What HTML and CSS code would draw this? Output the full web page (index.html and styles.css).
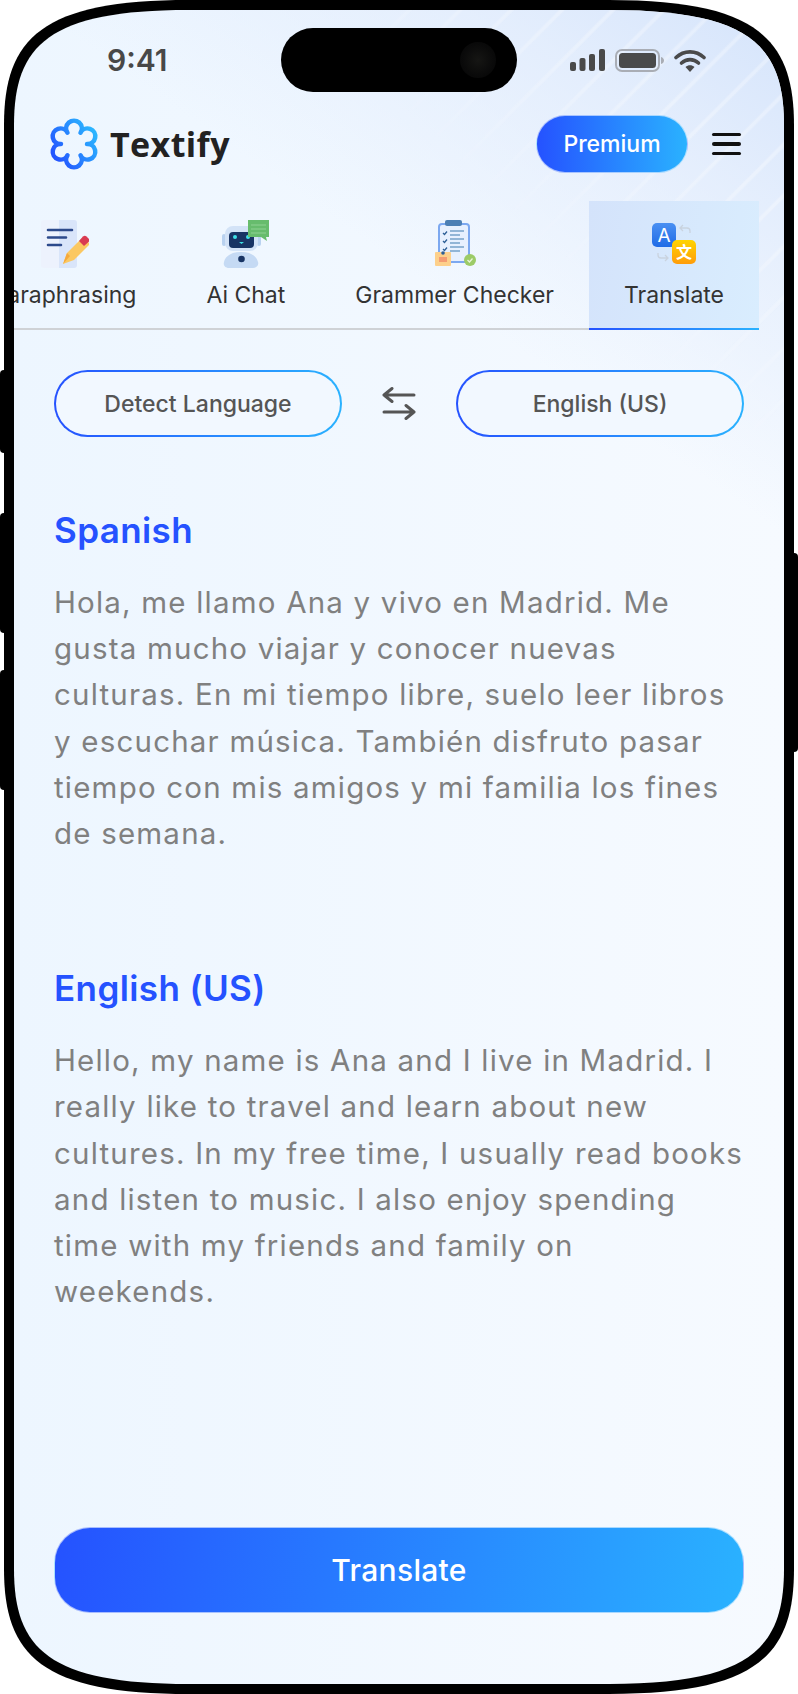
FILE: index.html
```html
<!DOCTYPE html>
<html lang="en">
<head>
  <meta charset="UTF-8" />
  <meta name="viewport" content="width=device-width, initial-scale=1.0"/>
  <title>Textify - Translate</title>
  <link rel="stylesheet" href="styles.css">
</head>
<body>
  <div class="phone">
    <span class="side-btn side-btn-mute"></span>
    <span class="side-btn side-btn-up"></span>
    <span class="side-btn side-btn-down"></span>
    <span class="side-btn side-btn-power"></span>

    <div class="frame">
    <div class="screen">
      <div class="status-bar">
        <span class="clock">9:41</span>
        <div class="island"><span class="island-cam"></span></div>
        <div class="status-icons">
          <svg width="35" height="22" viewBox="0 0 35 22"><rect x="0" y="13" width="6" height="9" rx="2"/><rect x="9.500" y="9" width="6" height="13" rx="2"/><rect x="19" y="5" width="6" height="17" rx="2"/><rect x="29" y="0" width="6" height="22" rx="2"/></svg>
          <svg width="49" height="23" viewBox="0 0 49 23"><rect x="1" y="1" width="43" height="21" rx="6" fill="none" stroke="#a9adb5" stroke-width="2"/><rect x="4" y="4" width="37" height="15" rx="3.500"/><path d="M46 8c2 .5 3 2 3 3.500s-1 3-3 3.500z" fill="#a9adb5"/></svg>
          <svg width="32" height="23" viewBox="0 0 32 23"><path d="M2 8.500C10 1 22 1 30 8.500" fill="none" stroke="#4a4a4a" stroke-width="3.600" stroke-linecap="round"/><path d="M7.500 14c5-4.500 12-4.500 17 0" fill="none" stroke="#4a4a4a" stroke-width="3.600" stroke-linecap="round"/><path d="M11.500 18c2.500-2.200 6.500-2.200 9 0L16 23z"/></svg>
        </div>
      </div>

      <header class="topbar">
        <div class="brand">
          <svg width="50" height="52" viewBox="0 0 50 52">
            <defs><linearGradient id="logoGrad" x1="0" y1="1" x2="1" y2="0.300"><stop offset="0" stop-color="#2246ff"/><stop offset="1" stop-color="#2bb4ff"/></linearGradient></defs>
            <path d="M38 26A7.800 7.800 0 1 0 31.500 14.740A7.800 7.800 0 1 0 18.500 14.740A7.800 7.800 0 1 0 12 26A7.800 7.800 0 1 0 18.500 37.260A7.800 7.800 0 1 0 31.500 37.260A7.800 7.800 0 1 0 38 26Z" fill="none" stroke="url(#logoGrad)" stroke-width="4.500" stroke-linejoin="round"/>
          </svg>
          <span class="brand-name">Textify</span>
        </div>
        <div class="topbar-right">
          <button class="premium-btn">Premium</button>
          <div class="menu-icon"><span></span><span></span><span></span></div>
        </div>
      </header>

      <nav class="tabs">
        <div class="tab">
          <svg width="48" height="48" viewBox="0 0 48 48">
            <rect x="0" y="0" width="36" height="48" rx="3" fill="#edf2fd"/>
            <path d="M18 0h15a3 3 0 0 1 3 3v42a3 3 0 0 1-3 3H18z" fill="#d9e5fa"/>
            <path d="M7 10h24M7 17.500h18M7 25h13" stroke="#2d4a8c" stroke-width="2.600" stroke-linecap="round"/>
            <path d="M22 44l4-11 16-16 7 7-16 16z" fill="#fbc862"/>
            <path d="M22 44l4-11 3 3z" fill="#f6a93b"/>
            <path d="M38 21l4-4.500a2.500 2.500 0 0 1 3.500 0l2 2a2.500 2.500 0 0 1 0 3.500l-4.500 4z" fill="#d93a52"/>
          </svg>
          <span>Paraphrasing</span>
        </div>
        <div class="tab">
          <svg width="48" height="48" viewBox="0 0 48 48">
            <rect x="0" y="14" width="4" height="12" rx="2" fill="#b9d2f0"/>
            <rect x="35" y="14" width="4" height="12" rx="2" fill="#b9d2f0"/>
            <rect x="3" y="6" width="33" height="25" rx="8" fill="#d3e3f7"/>
            <rect x="7" y="12" width="25" height="16" rx="4" fill="#183464"/>
            <circle cx="13" cy="17" r="2" fill="#3fe0e6"/><circle cx="26" cy="17" r="2" fill="#3fe0e6"/><path d="M17 22h5l-2.500 2z" fill="#3fe0e6"/>
            <path d="M7 48c-4 0-6-3-5-6 1-5 6-10 17-10s16 5 17 10c1 3-1 6-5 6z" fill="#c5daf4"/>
            <circle cx="19.500" cy="39" r="3.300" fill="#183464"/>
            <path d="M26 0h21v17h-3l1 4-6-4H26z" fill="#67bc6d"/>
            <path d="M29 5h15M29 9h15M29 13h15" stroke="#8fd294" stroke-width="1.200"/>
          </svg>
          <span>Ai Chat</span>
        </div>
        <div class="tab">
          <svg width="48" height="48" viewBox="0 0 48 48">
            <rect x="8" y="4" width="30" height="38" rx="3" fill="#e7f0fe" stroke="#7ca8f0" stroke-width="2"/>
            <rect x="14" y="0" width="17" height="6" rx="2" fill="#4c7fb4"/>
            <path d="M12 13l1.500 1.500 2.500-3M12 21l1.500 1.500 2.500-3M12 29l1.500 1.500 2.500-3" fill="none" stroke="#2d5f96" stroke-width="1.300"/>
            <path d="M19 11h14M19 15h10M19 19h14M19 23h10M19 27h14M19 31h10" stroke="#77a1c9" stroke-width="1.400"/>
            <rect x="4" y="32" width="16" height="14" rx="1" fill="#fdd08b"/>
            <rect x="8" y="37" width="8" height="5" fill="#f49c73"/>
            <circle cx="12" cy="33" r="1.800" fill="#2d5f96"/>
            <circle cx="39" cy="40" r="6" fill="#9ccb67"/>
            <path d="M36.500 40l2 2 3-3.500" fill="none" stroke="#e9f5da" stroke-width="1.300"/>
          </svg>
          <span>Grammer Checker</span>
        </div>
        <div class="tab tab-active">
          <svg width="48" height="48" viewBox="0 0 48 48">
            <defs>
              <linearGradient id="blueSq" x1="0" y1="0" x2="0" y2="1"><stop offset="0" stop-color="#4a90f2"/><stop offset="1" stop-color="#1f6be6"/></linearGradient>
              <linearGradient id="yellowSq" x1="0" y1="0" x2="0" y2="1"><stop offset="0" stop-color="#ffd400"/><stop offset="1" stop-color="#ff9c0a"/></linearGradient>
            </defs>
            <path d="M30 8h7c2 0 3 1 3 3v2M33 5l-3 3 3 3M18 38h-7c-2 0-3-1-3-3v-2M15 41l3-3-3-3" fill="none" stroke="#c9d3df" stroke-width="1.300"/>
            <rect x="2" y="3" width="24" height="24" rx="5" fill="url(#blueSq)"/>
            <text class="icon-letter" x="14" y="22" text-anchor="middle">A</text>
            <rect x="22" y="20" width="24" height="24" rx="5" fill="url(#yellowSq)"/>
            <text class="icon-han" x="34" y="38" text-anchor="middle">文</text>
          </svg>
          <span>Translate</span>
        </div>
      </nav>

      <main class="content">
        <div class="lang-row">
          <button class="lang-pill">Detect Language</button>
          <svg class="swap-icon" width="34" height="33" viewBox="0 0 34 33" fill="none" stroke="#555" stroke-width="3" stroke-linecap="round" stroke-linejoin="round">
            <path d="M2 8h30M10 1.500L2 8l8 6.500"/>
            <path d="M32 25H2M24 18.500l8 6.500-8 6.500"/>
          </svg>
          <button class="lang-pill">English (US)</button>
        </div>

        <section class="text-block">
          <h2>Spanish</h2>
          <p>Hola, me llamo Ana y vivo en Madrid. Me gusta mucho viajar y conocer nuevas culturas. En mi tiempo libre, suelo leer libros y escuchar música. También disfruto pasar tiempo con mis amigos y mi familia los fines de semana.</p>
        </section>

        <section class="text-block">
          <h2>English (US)</h2>
          <p>Hello, my name is Ana and I live in Madrid. I really like to travel and learn about new cultures. In my free time, I usually read books and listen to music. I also enjoy spending time with my friends and family on weekends.</p>
        </section>

        <button class="translate-btn">Translate</button>
      </main>
    </div>
    </div>
  </div>
</body>
</html>
```
FILE: styles.css
```css
:root {
  --grad: linear-gradient(90deg, #2552ff, #2ab2ff);
}

* {
  box-sizing: border-box;
}

html,
body {
  margin: 0;
  padding: 0;
  background: #fff;
}

body {
  font-family: Inter, 'Liberation Sans', sans-serif;
  width: 798px;
  height: 1694px;
  overflow: hidden;
}

button {
  font-family: inherit;
  cursor: pointer;
}

/* phone frame */
.phone {
  position: relative;
  width: 790px;
  height: 1694px;
  margin-left: 4px;
}

.frame {
  position: relative;
  height: 100%;
  padding: 10px;
  background: #000;
  clip-path: path("M0 125C0 38 38 0 185 0H605C752 0 790 38 790 125V1569C790 1656 752 1694 605 1694H185C38 1694 0 1656 0 1569Z");
}

.side-btn {
  position: absolute;
  width: 12px;
  background: #000;
  border-radius: 4px;
}

.side-btn-mute { left: -4px; top: 370px; height: 83px; }
.side-btn-up { left: -4px; top: 513px; height: 120px; }
.side-btn-down { left: -4px; top: 670px; height: 120px; }
.side-btn-power { right: -4px; top: 553px; height: 199px; }

.screen {
  position: relative;
  height: 100%;
  display: flex;
  flex-direction: column;
  overflow: hidden;
  clip-path: path("M0 115C0 35 35 0 175 0H595C735 0 770 35 770 115V1559C770 1639 735 1674 595 1674H175C35 1674 0 1639 0 1559Z");
  background:
    linear-gradient(215deg, #d5e4fb 0, rgba(221, 233, 252, 0.7) 170px, rgba(238, 246, 255, 0) 430px),
    linear-gradient(90deg, #edf6ff, #f6faff);
}

/* diagonal light streaks, top right */
.screen::before {
  content: "";
  position: absolute;
  top: 0;
  right: 0;
  width: 420px;
  height: 420px;
  background: repeating-linear-gradient(135deg, rgba(255, 255, 255, 0) 0 29px, rgba(255, 255, 255, 0.3) 31px 33px, rgba(255, 255, 255, 0) 35px 36px);
  -webkit-mask-image: linear-gradient(to bottom left, #000 25%, transparent 62%);
  mask-image: linear-gradient(to bottom left, #000 25%, transparent 62%);
}

.screen > * {
  position: relative;
}

/* status bar */
.status-bar {
  height: 64px;
  margin-top: 18px;
  padding: 0 78px 0 93px;
  display: flex;
  align-items: center;
  justify-content: space-between;
}

.clock {
  font-size: 30px;
  font-weight: 600;
  color: #484848;
}

.island {
  width: 236px;
  height: 64px;
  margin-left: 60px;
  background: #000;
  border-radius: 32px;
  display: flex;
  align-items: center;
  justify-content: flex-end;
  padding-right: 21px;
}

.island-cam {
  width: 36px;
  height: 36px;
  border-radius: 50%;
  background: radial-gradient(circle, #161614 0, #0a0a0a 60%, #050505 100%);
}

.status-icons {
  display: flex;
  align-items: center;
  gap: 10px;
  fill: #4a4a4a;
}

/* logo row */
.topbar {
  margin-top: 23px;
  padding: 0 43px 0 35px;
  height: 58px;
  display: flex;
  align-items: center;
  justify-content: space-between;
}

.brand {
  display: flex;
  align-items: center;
  gap: 11px;
}

.brand-name {
  font-family: 'Open Sans', sans-serif;
  font-size: 34px;
  font-weight: 700;
  letter-spacing: 0.4px;
  color: #222;
}

.topbar-right {
  display: flex;
  align-items: center;
  gap: 24px;
}

.premium-btn {
  width: 152px;
  height: 58px;
  border: 1px solid rgba(255, 255, 255, 0.6);
  border-radius: 29px;
  background: var(--grad);
  color: #fff;
  font-size: 23px;
  font-weight: 500;
}

.menu-icon {
  width: 29px;
  display: flex;
  flex-direction: column;
  gap: 6px;
}

.menu-icon span {
  height: 3.500px;
  background: #111;
  border-radius: 2px;
}

/* tabs */
.tabs {
  margin: 28px 25px 0 0;
  height: 129px;
  display: flex;
  justify-content: flex-end;
  overflow: hidden;
  background: linear-gradient(#cfd2d6, #cfd2d6) bottom / 100% 2px no-repeat;
}

.tab {
  flex-shrink: 0;
  padding: 19px 35px 0;
  display: flex;
  flex-direction: column;
  align-items: center;
  gap: 13px;
  font-size: 23px;
  color: #333;
}

.tab-active {
  width: 170px;
  background:
    var(--grad) bottom / 100% 2px no-repeat,
    linear-gradient(100deg, #d4e3fb, #d9edfe);
}

.icon-letter {
  font-family: Inter, sans-serif;
  font-size: 19px;
  font-weight: 400;
  fill: #fff;
}

.icon-han {
  font-family: 'Noto Sans CJK SC', sans-serif;
  font-size: 16px;
  font-weight: 700;
  fill: #fff;
}

/* main */
.content {
  flex: 1;
  padding: 40px 40px 71px;
  display: flex;
  flex-direction: column;
}

.lang-row {
  display: flex;
  align-items: center;
  justify-content: space-between;
}

.lang-pill {
  width: 288px;
  height: 67px;
  padding-top: 2px;
  border: 2px solid transparent;
  border-radius: 34px;
  background: linear-gradient(#f2f8ff, #f2f8ff) padding-box, var(--grad) border-box;
  color: #555;
  font-size: 23px;
  font-weight: 500;
}

.text-block {
  margin-top: 68px;
}

.text-block + .text-block {
  margin-top: 107px;
}

.text-block h2 {
  margin: 0 0 24px;
  font-size: 35px;
  font-weight: 600;
  letter-spacing: 0.4px;
  line-height: 50px;
  color: #2552ff;
}

.text-block p {
  margin: 0;
  font-size: 29.500px;
  line-height: 46.200px;
  letter-spacing: 1.200px;
  color: #808080;
}

.translate-btn {
  margin-top: auto;
  height: 86px;
  border: 1px solid rgba(255, 255, 255, 0.6);
  border-radius: 36px;
  background: linear-gradient(100deg, #2552ff, #2ab2ff);
  color: #fff;
  font-size: 30px;
  font-weight: 500;
  letter-spacing: 0.3px;
}
```
